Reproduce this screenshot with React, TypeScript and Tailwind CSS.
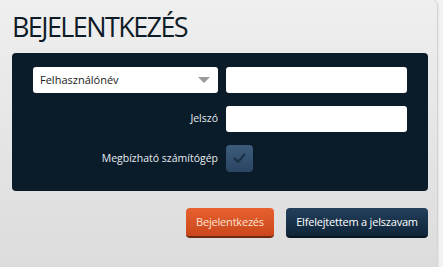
import React from 'react';

const font = { fontFamily: '"Open Sans", "Liberation Sans", sans-serif' };

export default function App() {
  return (
    <div className="w-[443px] h-[267px] bg-[#f3f3f3] overflow-hidden" style={font}>
      <div className="w-[437px] h-[267px] rounded-tr-[6px] bg-gradient-to-b from-[#efefef] to-[#dcdcdc] shadow-[1px_0_2px_rgba(0,0,0,0.18)] pl-[12px] pr-[9px] pt-[11px]">
        <h1 className="text-[27px] leading-[31px] font-medium text-[#0d1b27] tracking-[-1.6px]">
          BEJELENTKEZÉS
        </h1>

        <div className="mt-[11px] h-[138px] rounded-[4px] bg-[#0a1b29] pl-[21px] pr-[21px] pt-[14px] flex flex-col gap-[13px]">
          <div className="flex items-center gap-[8px]">
            <div className="w-[185px] h-[26px] rounded-[3px] bg-white flex items-center justify-between pl-[7px] pr-[8px]">
              <span className="text-[11px] text-[#1a1a1a]">Felhasználónév</span>
              <span className="w-0 h-0 border-l-[6px] border-r-[6px] border-t-[6px] border-l-transparent border-r-transparent border-t-[#9a9a9a]" />
            </div>
            <div className="w-[181px] h-[26px] rounded-[3px] bg-white" />
          </div>

          <div className="flex items-center gap-[8px]">
            <div className="w-[185px] text-right text-[10.5px] text-[#e6ecf1]">Jelszó</div>
            <div className="w-[181px] h-[26px] rounded-[3px] bg-white" />
          </div>

          <div className="flex items-center gap-[8px]">
            <div className="w-[185px] text-right text-[10.5px] text-[#e6ecf1]">Megbízható számítógép</div>
            <div className="w-[27px] h-[27px] rounded-[4px] bg-gradient-to-b from-[#3d5c7c] to-[#2a4562] flex items-center justify-center">
              <svg width="13" height="11" viewBox="0 0 13 11" fill="none">
                <path d="M1.5 5.5 L5 9 L11.5 1.5" stroke="#1b2f45" strokeWidth="2" strokeLinecap="round" strokeLinejoin="round" />
              </svg>
            </div>
          </div>
        </div>

        <div className="mt-[17px] flex justify-end gap-[12px]">
          <button className="w-[88px] h-[30px] rounded-[4px] bg-gradient-to-b from-[#e8612f] to-[#c9471b] border-b-[2px] border-[#6e2a10] text-[11px] font-medium tracking-[-0.2px] text-[#fbe3d3]">
            Bejelentkezés
          </button>
          <button className="w-[142px] h-[30px] rounded-[4px] bg-gradient-to-b from-[#23405d] to-[#0f2538] border-b-[2px] border-[#081420] text-[11px] font-medium tracking-[-0.2px] text-white">
            Elfelejtettem a jelszavam
          </button>
        </div>
      </div>
    </div>
  );
}
